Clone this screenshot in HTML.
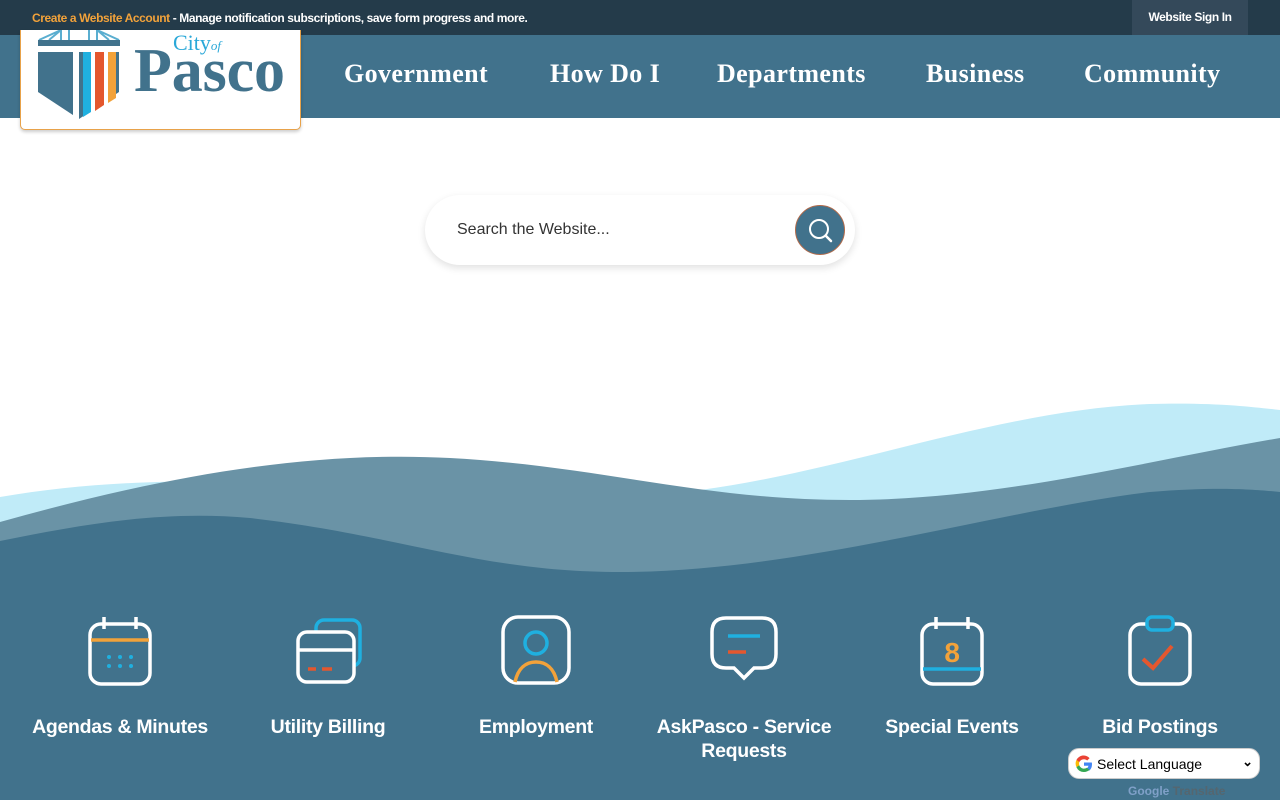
<!DOCTYPE html>
<html><head><meta charset="utf-8"><style>
*{box-sizing:border-box;margin:0;padding:0}
body{width:1280px;height:800px;overflow:hidden;background:#fff;font-family:"Liberation Sans",sans-serif;position:relative}
.top{position:absolute;left:0;top:0;width:1280px;height:35px;background:#243b4a;color:#fff;font-size:12px;font-weight:bold;letter-spacing:-0.4px}
.top .msg{position:absolute;left:32px;top:11px}
.top .msg b{color:#f2a23a}
.top .sign{position:absolute;left:1132px;top:0;width:116px;height:35px;background:#34495a;text-align:center;line-height:35px}
.nav{position:absolute;left:0;top:35px;width:1280px;height:83px;background:#41728c}
.nav a{position:absolute;top:24px;color:#fff;font-family:"Liberation Serif",serif;font-weight:bold;font-size:26px;letter-spacing:0.4px;text-decoration:none}
.logo{position:absolute;left:20px;top:30px;width:281px;height:100px;background:#fff;border:1px solid #e8a24a;border-top:none;border-radius:0 0 5px 5px;box-shadow:0 2px 3px rgba(0,0,0,.2)}
.search{position:absolute;left:425px;top:195px;width:430px;height:70px;border-radius:35px;background:#fff;box-shadow:0 3px 8px rgba(0,0,0,.12)}
.search span{position:absolute;left:32px;top:26px;font-size:16px;color:#333}
.search .btn{position:absolute;left:370px;top:10px;width:50px;height:50px;border-radius:50%;background:#41728c;border:1px solid #b06a4a}
.item{position:absolute;top:600px;width:200px;text-align:center;color:#fff;font-weight:bold;font-size:19.5px;letter-spacing:-0.3px;line-height:24px}
.item svg{display:block;margin:14px auto 29px}
.lang{position:absolute;left:1068px;top:748px;width:192px;height:31px;background:#fff;border-radius:11px;border:1px solid #ccc;font-size:14px}
.gt{position:absolute;left:1128px;top:784px;font-size:12px;font-weight:bold;color:#55666f}
</style></head><body>
<div class="top"><div class="msg"><b>Create a Website Account</b> - Manage notification subscriptions, save form progress and more.</div><div class="sign">Website Sign In</div></div>
<div class="nav">
<a style="left:344px">Government</a><a style="left:550px">How Do I</a><a style="left:717px">Departments</a><a style="left:926px">Business</a><a style="left:1084px">Community</a>
</div>
<div class="logo">
<svg width="281" height="100" viewBox="0 0 281 100" style="position:absolute;left:0;top:0">
<g stroke="#5aaed0" stroke-width="2" fill="none"><path d="M18 10 L40 0 M98 10 L76 0 M28 10 L40 0 M88 10 L76 0 M40 0 V10 M76 0 V10 M48 0 V10 M68 0 V10"/></g>
<rect x="17" y="10" width="82" height="6" fill="#41728c"/>
<path d="M17 22 H98 V62 L58 89 L17 62Z" fill="#41728c"/>
<rect x="52" y="22" width="6" height="67" fill="#fff"/>
<path d="M62 22 h8 v60 l-8 5z" fill="#1fb0e0"/>
<path d="M74 22 h9 v53 l-9 6z" fill="#e4572e"/>
<path d="M87 22 h8 v46 l-8 5z" fill="#f2a23a"/>
<path d="M70 22 h4 v59 l-4 3z M83 22 h4 v52 l-4 3z" fill="#fff"/>
<text x="152" y="20" font-family="Liberation Serif,serif" font-size="22" fill="#2aa8d8">City<tspan font-size="13" font-style="italic">of</tspan></text>
<text x="113" y="61" font-family="Liberation Serif,serif" font-weight="bold" font-size="62" fill="#41728c" letter-spacing="-1" textLength="150">Pasco</text>
</svg></div>
<div class="search"><span>Search the Website...</span><div class="btn"><svg width="50" height="50" viewBox="0 0 50 50"><circle cx="23" cy="23" r="9" stroke="#fff" stroke-width="2" fill="none"/><path d="M30 30 L35 35" stroke="#fff" stroke-width="2.5" stroke-linecap="round"/></svg></div></div>
<svg width="1280" height="400" viewBox="0 400 1280 400" style="position:absolute;left:0;top:400px">
<path d="M0 497 C100 480 200 478 350 485 C500 492 600 500 700 490 C850 470 1000 410 1150 404 C1220 402 1260 408 1280 410 V800 H0Z" fill="#c0ebf8"/>
<path d="M0 522 C150 480 300 450 450 458 C600 466 700 500 850 500 C1000 500 1150 460 1280 438 V800 H0Z" fill="#6a93a6"/>
<path d="M0 541 C80 525 160 510 250 518 C400 535 480 572 620 572 C800 572 1000 510 1150 492 C1220 486 1260 490 1280 492 V800 H0Z" fill="#41728c"/>
</svg>
<div class="item" style="left:20px"><svg width="70" height="72" viewBox="0 0 70 72"><rect x="5" y="10" width="60" height="60" rx="11" stroke="#fff" stroke-width="3.5" fill="none"/><path d="M19 3v12M51 3v12" stroke="#fff" stroke-width="3.5"/><path d="M6 26h58" stroke="#f2a23a" stroke-width="3.5"/><g fill="#1fb0e0"><circle cx="24" cy="43" r="2"/><circle cx="35" cy="43" r="2"/><circle cx="46" cy="43" r="2"/><circle cx="24" cy="52" r="2"/><circle cx="35" cy="52" r="2"/><circle cx="46" cy="52" r="2"/></g></svg>Agendas &amp; Minutes</div>
<div class="item" style="left:228px"><svg width="72" height="72" viewBox="0 0 72 72"><rect x="24" y="6" width="44" height="46" rx="8" stroke="#1fb0e0" stroke-width="3.5" fill="none"/><rect x="6" y="18" width="56" height="50" rx="9" stroke="#fff" stroke-width="3.5" fill="#41728c"/><path d="M7 36h54" stroke="#fff" stroke-width="3.5"/><path d="M16 55h8M30 55h10" stroke="#e4572e" stroke-width="3.5"/></svg>Utility Billing</div>
<div class="item" style="left:436px"><svg width="72" height="72" viewBox="0 0 72 72"><rect x="3" y="3" width="66" height="66" rx="15" stroke="#fff" stroke-width="3.5" fill="none"/><circle cx="36" cy="29" r="11" stroke="#1fb0e0" stroke-width="3.5" fill="none"/><path d="M15 68 C18 54 26 48 36 48 C46 48 54 54 57 68" stroke="#f2a23a" stroke-width="3.5" fill="none"/></svg>Employment</div>
<div class="item" style="left:644px"><svg width="72" height="72" viewBox="0 0 72 72"><path d="M18 4 H54 Q68 4 68 18 V40 Q68 54 54 54 H46 L36 64 L26 54 H18 Q4 54 4 40 V18 Q4 4 18 4Z" stroke="#fff" stroke-width="3.5" fill="none"/><path d="M20 22h32" stroke="#1fb0e0" stroke-width="3.5"/><path d="M20 38h18" stroke="#e4572e" stroke-width="3.5"/></svg>AskPasco - Service Requests</div>
<div class="item" style="left:852px"><svg width="70" height="72" viewBox="0 0 70 72"><rect x="5" y="10" width="60" height="60" rx="11" stroke="#fff" stroke-width="3.5" fill="none"/><path d="M19 3v12M51 3v12" stroke="#fff" stroke-width="3.5"/><path d="M6 55h58" stroke="#1fb0e0" stroke-width="3.5"/><text x="35" y="48" text-anchor="middle" font-family="Liberation Sans,sans-serif" font-weight="bold" font-size="28" fill="#f2a23a">8</text></svg>Special Events</div>
<div class="item" style="left:1060px"><svg width="70" height="72" viewBox="0 0 70 72"><rect x="5" y="10" width="60" height="60" rx="11" stroke="#fff" stroke-width="3.5" fill="none"/><rect x="22" y="3" width="26" height="13" rx="5" stroke="#1fb0e0" stroke-width="3.5" fill="#41728c"/><path d="M18 45 L28 54 L47 32" stroke="#e4572e" stroke-width="4" fill="none"/></svg>Bid Postings</div>
<div class="lang"><svg width="20" height="20" viewBox="0 0 20 20" style="position:absolute;left:5px;top:5px"><path d="M18 10.2c0-.6-.1-1.2-.2-1.7H10v3.3h4.5a4 4 0 01-1.7 2.6v2.1h2.7c1.6-1.5 2.5-3.7 2.5-6.3z" fill="#4285f4"/><path d="M10 18c2.3 0 4.1-.8 5.5-2.1l-2.7-2.1c-.7.5-1.7.8-2.8.8-2.2 0-4-1.5-4.7-3.4H2.5v2.2A8 8 0 0010 18z" fill="#34a853"/><path d="M5.3 11.2a4.8 4.8 0 010-3.1V5.9H2.5a8 8 0 000 7.2z" fill="#fbbc05"/><path d="M10 5.2c1.2 0 2.3.4 3.2 1.3l2.4-2.4A8 8 0 002.5 5.9l2.8 2.2C6 6.6 7.8 5.2 10 5.2z" fill="#ea4335"/></svg><span style="position:absolute;left:28px;top:7px">Select Language</span><span style="position:absolute;right:6px;top:5px;font-size:13px;font-weight:bold">&#8964;</span></div>
<div class="gt"><span style="color:#7fa0c8">Google</span> Translate</div>
</body></html>
